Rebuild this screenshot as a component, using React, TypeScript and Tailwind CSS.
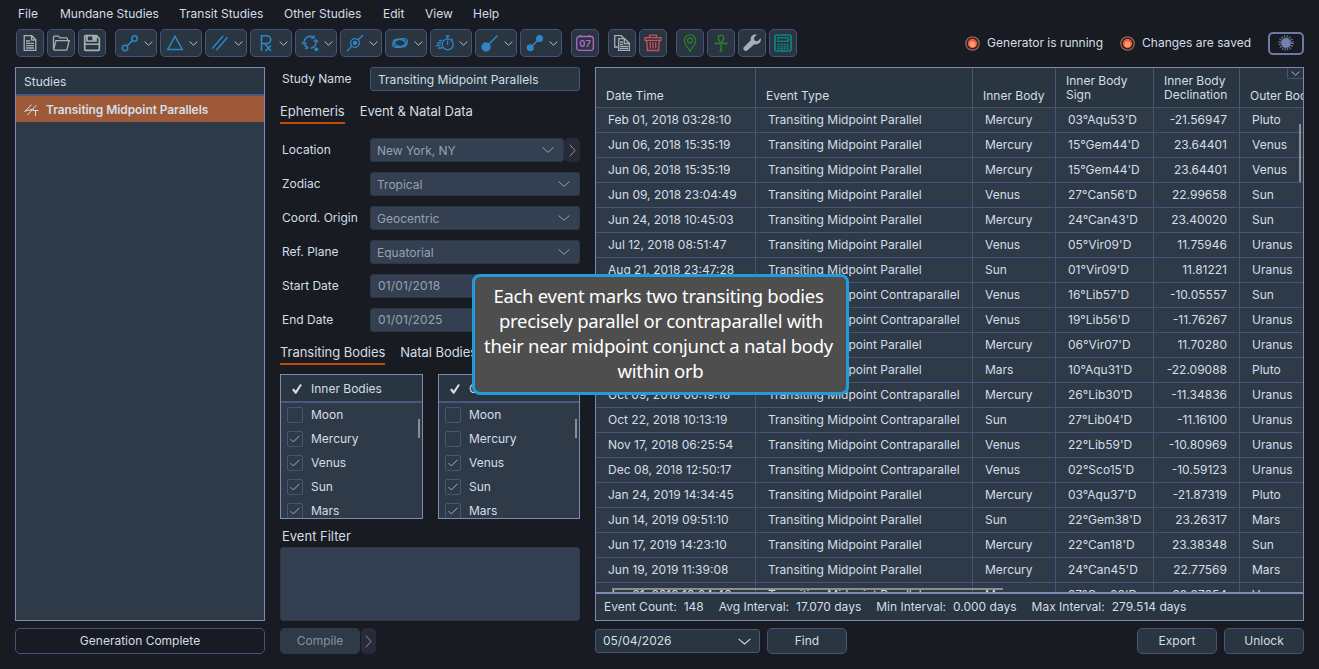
import { ReactNode } from 'react';
import clsx from 'clsx';

const menuItems = [
  { label: 'File', width: 'w-[42px]' },
  { label: 'Mundane Studies', width: 'w-[119px]' },
  { label: 'Transit Studies', width: 'w-[105px]' },
  { label: 'Other Studies', width: 'w-[99px]' },
  { label: 'Edit', width: 'w-[42px]' },
  { label: 'View', width: 'w-[48px]' },
  { label: 'Help', width: 'w-[40px]' },
];

const Icon = ({ children, className = 'text-[#2f86c6]' }: { children: ReactNode; className?: string }) => (
  <svg
    viewBox="0 0 18 18"
    className={clsx('h-[18px] w-[18px] shrink-0', className)}
    fill="none"
    stroke="currentColor"
    strokeWidth="1.3"
  >
    {children}
  </svg>
);

const Chevron = ({ className }: { className?: string }) => (
  <svg viewBox="0 0 12 6" className={className} fill="none" stroke="currentColor" strokeWidth="1">
    <path d="M.5.5 6 5.3 11.5.5" />
  </svg>
);

const SmallChevron = () => (
  <svg viewBox="0 0 9 5" className="h-[5px] w-[9px] shrink-0 text-[#b3bec7]" fill="none" stroke="currentColor" strokeWidth="1">
    <path d="M.6.5 4.5 4.2 8.4.5" />
  </svg>
);

const SideChevron = () => (
  <svg viewBox="0 0 7 13" className="h-[13px] w-[7px] text-[#8b949e]" fill="none" stroke="currentColor" strokeWidth="1">
    <path d="M.8.7 6 6.5.8 12.3" />
  </svg>
);

const DocumentIcon = () => (
  <Icon className="text-[#a6afb5]">
    <path d="M3.2 1.7h7.6l4 4v10.6H3.2zM10.5 2v4h4M5 7h4M5 9.4h8M5 11.7h8M5 14h8" />
  </Icon>
);

const FolderIcon = () => (
  <Icon className="text-[#a6afb5]">
    <path d="M1.5 15V3.2q0-1 1-1h4l1.3 1.6h6.7q1 0 1 1v1.4M1.7 15.3 4 6.7h13.2L15 15.3q-.2.8-1 .8H2.4q-.9 0-.7-.8z" />
  </Icon>
);

const SaveIcon = () => (
  <Icon className="text-[#a6afb5]">
    <path d="M2.5 1.7h11L16.3 4.5v11q0 .9-.9.9H2.6q-.9 0-.9-.9V2.6q0-.9.8-.9zM4 2v5h9V2" strokeWidth="1.7" />
    <path d="M2 10.2h14" strokeWidth="1.5" />
    <path d="M10 2h2v4h-2z" fill="currentColor" />
  </Icon>
);

const dropdownIcons = [
  <Icon>
    <circle cx="4" cy="14" r="2.7" strokeWidth="1.5" />
    <circle cx="13.5" cy="4.5" r="2.7" strokeWidth="1.5" />
    <path d="m6 12 5.5-5.5" strokeWidth="1.7" />
  </Icon>,
  <Icon>
    <path d="M9 2.3 16.3 15.5H1.7z" strokeWidth="1.5" />
  </Icon>,
  <Icon>
    <path d="M1.3 14.5 12.2 1.8M5.3 16.3 16.5 3.2" strokeWidth="1.5" />
  </Icon>,
  <Icon>
    <path d="M5.5 17V1.8h5.3a3.7 3.7 0 0 1 0 7.7H5.5M9 9.7 15 17M9.5 17l5.5-5.5" strokeWidth="1.6" />
  </Icon>,
  <Icon>
    <path d="M3.3 9.5A6 6 0 0 1 12.5 3.3M14.9 6.5A6 6 0 0 1 9.5 14.3M3.5 10.5A6 6 0 0 0 7.3 14.2" strokeWidth="1.5" />
    <path d="m.8 8.2 2.4 2.6 2.5-2M12.5 7.8l2.4-2.2 2.3 2.2M13 1v3.2H9.7M6.3 12v2.5H4" strokeWidth="1.2" />
    <circle cx="15.3" cy="15.3" r="1.9" fill="currentColor" stroke="none" />
  </Icon>,
  <Icon>
    <circle cx="9" cy="9" r="4.3" />
    <circle cx="9" cy="9" r="1.5" fill="currentColor" />
    <path d="m1 17 5-5M12 6l5-5" />
  </Icon>,
  <Icon>
    <ellipse cx="9" cy="9" rx="7.7" ry="4" transform="rotate(-17 9 9)" />
    <ellipse cx="9" cy="9" rx="7" ry="3.6" transform="rotate(14 9 9)" />
    <ellipse cx="9" cy="9" rx="5.5" ry="3.6" transform="rotate(-15 9 9)" strokeWidth=".8" />
  </Icon>,
  <Icon>
    <circle cx="11.6" cy="10.4" r="5.5" />
    <path d="M11.6 11V6.5M9.7 2h3.8M11.6 2v3M15.6 5.8l1-1M3 6.5h3M1 9h4M0 11.5h4.5M2 14h4" />
  </Icon>,
  <Icon>
    <circle cx="5" cy="13" r="4" fill="currentColor" />
    <path d="m7 11 9.5-9.5" strokeWidth="1.6" />
  </Icon>,
  <Icon>
    <circle cx="4.2" cy="13.8" r="2.9" fill="currentColor" />
    <circle cx="13.5" cy="4.5" r="2.9" fill="currentColor" />
    <path d="m5 13 8-8" strokeWidth="1.7" />
  </Icon>,
];

const CalendarIcon = () => (
  <Icon className="text-[#b565c4]">
    <rect x=".7" y="2.5" width="16.6" height="13.8" rx="2.5" />
    <path d="M4.5 1v2M13.5 1v2" strokeWidth="1.6" />
    <text x="9.2" y="12.6" textAnchor="middle" fontSize="9" fontWeight="700" letterSpacing=".4" fill="currentColor" stroke="none">
      07
    </text>
  </Icon>
);

const CopyIcon = () => (
  <Icon className="text-[#a6afb5]">
    <path d="M5 13H1.7V1.7h6.6l3 3" />
    <path d="M5.7 4.7h6l4.6 4.6v7H5.7z" />
    <path d="M11.3 4.7V9.5h5M7 8h3M7 10.3h3M7 12.3h8M7 14.3h8" />
  </Icon>
);

const TrashIcon = () => (
  <Icon className="text-[#c9525a]">
    <path d="M1 3.7h16v2.6H1zM5.5 3.5V1.2h7v2.3M2.7 6.5l.7 10h11.2l.7-10M6.3 8v6.5M9 8v6.5M11.7 8v6.5" />
  </Icon>
);

const PinIcon = () => (
  <Icon className="text-[#2c7d2d]">
    <path d="M9 17.3C7.5 14 3.3 10.5 3.3 6.5a5.7 5.7 0 0 1 11.4 0C14.7 10.5 10.5 14 9 17.3z" />
    <circle cx="9" cy="6.5" r="2.5" />
  </Icon>
);

const AnkhIcon = () => (
  <Icon className="text-[#2c7d2d]">
    <path
      d="M9 9.3C5.5 6.3 5.3 1.2 9 1.2s3.5 5.1 0 8.1zM9 9v8.3M3.5 8.3v2.4M14.5 8.3v2.4M3.5 9.5h11M7.3 17h3.4"
      strokeWidth="1.5"
    />
  </Icon>
);

const WrenchIcon = () => (
  <Icon className="text-[#a6afb5]">
    <path
      d="M17.7 4.2 14.5 7.2 11.5 6.5 10.9 3.7 14 .6C10.3-.4 7 2.3 7.8 6.3L.8 13.2c-1.5 1.9 1.2 4.9 3.4 3.3L11.3 10.2c4.2 1 7.4-2.2 6.4-6z"
      fill="currentColor"
      stroke="none"
    />
  </Icon>
);

const CalculatorIcon = () => (
  <Icon className="text-[#0c8584]">
    <rect x="1" y="1" width="16" height="16" rx="1.8" strokeWidth="1.7" />
    <rect x="4" y="3.7" width="10" height="3.6" />
    <path d="M3.5 10.5h11M3.5 12.7h11M3.5 14.8h11" strokeWidth="1.4" strokeDasharray="2 1" />
  </Icon>
);

const ToolButton = ({ children, dropdown }: { children: ReactNode; dropdown?: boolean }) => (
  <button
    className={clsx(
      'flex h-7 items-center rounded-[5px] border border-[#46537a] bg-[#293540]',
      dropdown ? 'w-[42px] gap-[5px] pl-[5px]' : 'w-7 justify-center',
    )}
  >
    {children}
    {dropdown && <SmallChevron />}
  </button>
);

const StatusLight = ({ label }: { label: string }) => (
  <div className="flex items-center gap-[7px]">
    <svg viewBox="0 0 15 15" className="h-[15px] w-[15px]">
      <circle cx="7.5" cy="7.5" r="6.7" fill="#351610" stroke="#8b6a64" strokeWidth="1.3" />
      <circle cx="7.5" cy="7.5" r="4.7" fill="#ef5a38" />
      <circle cx="7.5" cy="8.3" r="3" fill="#fb9b78" />
    </svg>
    <span>{label}</span>
  </div>
);

const Toolbar = () => (
  <div className="flex h-7 items-center pl-4 pr-[15px]">
    <div className="flex gap-[3px]">
      <ToolButton><DocumentIcon /></ToolButton>
      <ToolButton><FolderIcon /></ToolButton>
      <ToolButton><SaveIcon /></ToolButton>
    </div>
    <div className="ml-[9px] flex gap-[3px]">
      {dropdownIcons.map((icon, i) => (
        <ToolButton key={i} dropdown>{icon}</ToolButton>
      ))}
    </div>
    <div className="ml-[9px] flex">
      <ToolButton><CalendarIcon /></ToolButton>
    </div>
    <div className="ml-[9px] flex gap-[3px]">
      <ToolButton><CopyIcon /></ToolButton>
      <ToolButton><TrashIcon /></ToolButton>
    </div>
    <div className="ml-[9px] flex gap-[3px]">
      <ToolButton><PinIcon /></ToolButton>
      <ToolButton><AnkhIcon /></ToolButton>
      <ToolButton><WrenchIcon /></ToolButton>
      <ToolButton><CalculatorIcon /></ToolButton>
    </div>
    <div className="ml-auto flex items-center gap-[17px]">
      <StatusLight label="Generator is running" />
      <StatusLight label="Changes are saved" />
      <button className="flex h-[23px] w-9 items-center justify-center rounded-[5px] border-2 border-[#6c7aa3]">
        <svg viewBox="0 0 16 16" className="h-4 w-4 shrink-0 text-[#7382ac]">
          <circle cx="8" cy="8" r="4.9" fill="currentColor" />
          <circle cx="8" cy="8" r="6.4" fill="none" stroke="currentColor" strokeWidth="2.6" strokeDasharray="1 1.51" />
        </svg>
      </button>
    </div>
  </div>
);

const StudiesPanel = () => (
  <div className="flex w-[250px] flex-col gap-[7px]">
    <div className="h-[554px] border border-[#7c8ab4] bg-[#2f3a49]">
      <div className="flex h-7 items-center border-b-2 border-[#4a5780] bg-[#293540] pl-2 pt-0.5">Studies</div>
      <div className="flex h-[26px] items-center bg-[#9e5a38] pl-2 pt-0.5 font-semibold tracking-[-0.08px]">
        <svg viewBox="0 0 15 14" className="mr-[7px] h-3.5 w-[15px]" fill="none" stroke="currentColor">
          <path d="M.5 9 7.5 1.5M3.5 12 12.5 2M1 8l9-2M8.5 7.5h6M11.5 7.5v5.5" />
        </svg>
        Transiting Midpoint Parallels
      </div>
    </div>
    <button className="h-[26px] rounded-[5px] border border-[#46537a]">Generation Complete</button>
  </div>
);

const Tabs = ({ tabs }: { tabs: string[] }) => (
  <div className="flex h-[21px] gap-[15px] text-[13px] tracking-[-0.05px]">
    {tabs.map((tab, i) => (
      <div key={tab} className={clsx('whitespace-nowrap', i === 0 && 'border-b-2 border-[#bd4c0b]')}>
        {tab}
      </div>
    ))}
  </div>
);

const fieldStyle = 'flex h-6 items-center rounded-[3px] border border-[#2b3844] bg-[#344052] text-[#94a2af]';

const Field = ({ label, children }: { label: string; children: ReactNode }) => (
  <div className="flex h-6 items-center">
    <span className="w-[90px] pl-0.5">{label}</span>
    {children}
  </div>
);

const Select = ({ value, className }: { value: string; className: string }) => (
  <div className={clsx(fieldStyle, 'justify-between pl-1.5 pr-[9px]', className)}>
    <span className="pt-0.5">{value}</span>
    <Chevron className="h-1.5 w-3" />
  </div>
);

const bodies = ['Moon', 'Mercury', 'Venus', 'Sun', 'Mars'];

const BodyList = ({ title, checked, className }: { title: string; checked: string[]; className: string }) => (
  <div className={clsx('relative h-[145px] overflow-hidden border border-[#7c8ab4] bg-[#2f3a49]', className)}>
    <div className="flex h-7 items-center border-b-2 border-[#4a5780] bg-[#293540] pl-[11px] pt-0.5">
      <svg viewBox="0 0 10 10" className="mr-[9px] h-2.5 w-2.5" fill="currentColor">
        <path d="M0 5.7 2 4.5 3.7 6.7 8 .3 10 .8 4.3 9.7H3.2z" />
      </svg>
      {title}
    </div>
    {bodies.map((body) => (
      <div key={body} className="flex h-6 items-center pl-1.5">
        <span className="mr-2 flex h-4 w-4 items-center justify-center rounded-[2px] border border-[#46537a]">
          {checked.includes(body) && (
            <svg viewBox="0 0 10 8" className="h-2 w-2.5 text-[#a2adb6]" fill="none" stroke="currentColor">
              <path d="M.5 4.2 3.3 7 9.5.7" />
            </svg>
          )}
        </span>
        {body}
      </div>
    ))}
    <div className="absolute right-0.5 top-[44px] h-[19px] w-0.5 bg-[#8b8d8f]" />
  </div>
);

const StudyForm = () => (
  <div className="flex w-[300px] flex-col">
    <Field label="Study Name">
      <div className="flex h-6 w-[210px] items-center rounded-[3px] border border-[#46537a] bg-[#293540] pl-[7px] pt-0.5 tracking-[0.02px]">
        Transiting Midpoint Parallels
      </div>
    </Field>
    <div className="mb-3.5 mt-3">
      <Tabs tabs={['Ephemeris', 'Event & Natal Data']} />
    </div>
    <div className="flex flex-col gap-2.5">
      <Field label="Location">
        <Select value="New York, NY" className="w-[194px]" />
        <span className="flex h-6 w-4 items-center justify-center rounded-[5px] bg-[#262b37]">
          <SideChevron />
        </span>
      </Field>
      <Field label="Zodiac"><Select value="Tropical" className="w-[210px]" /></Field>
      <Field label="Coord. Origin"><Select value="Geocentric" className="w-[210px]" /></Field>
      <Field label="Ref. Plane"><Select value="Equatorial" className="w-[210px]" /></Field>
      <Field label="Start Date"><div className={clsx(fieldStyle, 'w-[210px] pl-[7px] tracking-[0.15px]')}>01/01/2018</div></Field>
      <Field label="End Date"><div className={clsx(fieldStyle, 'w-[210px] pl-[7px] tracking-[0.15px]')}>01/01/2025</div></Field>
    </div>
    <div className="mb-[9px] mt-3">
      <Tabs tabs={['Transiting Bodies', 'Natal Bodies']} />
    </div>
    <div className="flex justify-between">
      <BodyList title="Inner Bodies" checked={['Mercury', 'Venus', 'Sun', 'Mars']} className="w-[143px]" />
      <BodyList title="Outer Bodies" checked={['Venus', 'Sun', 'Mars']} className="w-[142px]" />
    </div>
    <div className="flex h-7 items-center pl-0.5 pt-1.5 text-[13px]">Event Filter</div>
    <div className="h-[74px] rounded-[3px] border border-[#2b3844] bg-[#344052]" />
    <div className="mt-[7px] flex gap-px">
      <button className="h-[26px] w-20 rounded-[5px] bg-[#2f3a49] text-[#84929e]">Compile</button>
      <span className="flex h-[26px] w-[15px] items-center justify-center rounded-[5px] bg-[#262b37]">
        <SideChevron />
      </span>
    </div>
  </div>
);

const par = 'Transiting Midpoint Parallel';
const contra = 'Transiting Midpoint Contraparallel';

const events = [
  ['Feb 01, 2018 03:28:10', par, 'Mercury', "03°Aqu53'D", '-21.56947', 'Pluto'],
  ['Jun 06, 2018 15:35:19', par, 'Mercury', "15°Gem44'D", '23.64401', 'Venus'],
  ['Jun 06, 2018 15:35:19', par, 'Mercury', "15°Gem44'D", '23.64401', 'Venus'],
  ['Jun 09, 2018 23:04:49', par, 'Venus', "27°Can56'D", '22.99658', 'Sun'],
  ['Jun 24, 2018 10:45:03', par, 'Mercury', "24°Can43'D", '23.40020', 'Sun'],
  ['Jul 12, 2018 08:51:47', par, 'Venus', "05°Vir09'D", '11.75946', 'Uranus'],
  ['Aug 21, 2018 23:47:28', par, 'Sun', "01°Vir09'D", '11.81221', 'Uranus'],
  ['Sep 08, 2018 12:16:32', contra, 'Venus', "16°Lib57'D", '-10.05557', 'Sun'],
  ['Sep 11, 2018 04:22:51', contra, 'Venus', "19°Lib56'D", '-11.76267', 'Uranus'],
  ['Sep 12, 2018 09:40:17', par, 'Mercury', "06°Vir07'D", '11.70280', 'Uranus'],
  ['Sep 27, 2018 17:05:38', par, 'Mars', "10°Aqu31'D", '-22.09088', 'Pluto'],
  ['Oct 09, 2018 00:19:18', contra, 'Mercury', "26°Lib30'D", '-11.34836', 'Uranus'],
  ['Oct 22, 2018 10:13:19', contra, 'Sun', "27°Lib04'D", '-11.16100', 'Uranus'],
  ['Nov 17, 2018 06:25:54', contra, 'Venus', "22°Lib59'D", '-10.80969', 'Uranus'],
  ['Dec 08, 2018 12:50:17', contra, 'Venus', "02°Sco15'D", '-10.59123', 'Uranus'],
  ['Jan 24, 2019 14:34:45', par, 'Mercury', "03°Aqu37'D", '-21.87319', 'Pluto'],
  ['Jun 14, 2019 09:51:10', par, 'Sun', "22°Gem38'D", '23.26317', 'Mars'],
  ['Jun 17, 2019 14:23:10', par, 'Mercury', "22°Can18'D", '23.38348', 'Sun'],
  ['Jun 19, 2019 11:39:08', par, 'Mercury', "24°Can45'D", '22.77569', 'Mars'],
  ['Jun 21, 2019 18:04:48', par, 'Mercury', "27°Can03'D", '22.27654', 'Venus'],
];

const headers = ['Date Time', 'Event Type', 'Inner Body', 'Inner Body\nSign', 'Inner Body\nDeclination', 'Outer Body'];
const columns = 'grid grid-cols-[160px_217px_83px_98px_86px_90px]';

const EventTable = () => (
  <div className="relative flex h-[554px] flex-col border border-[#7c8ab4] bg-[#2f3a49]">
    <div className={clsx(columns, 'h-10 shrink-0 overflow-hidden border-b border-[#46565f] bg-[#293540]')}>
      {headers.map((header) => (
        <div
          key={header}
          className={clsx(
            'flex items-end whitespace-pre border-r border-[#46537a] pl-2.5 leading-[14px]',
            header.includes('\n') ? 'pb-[5px]' : 'pb-1',
          )}
        >
          {header}
        </div>
      ))}
    </div>
    <div className="min-h-0 flex-1 overflow-hidden">
      {events.map((row, i) => (
        <div key={i} className={clsx(columns, 'h-[25px] border-b border-[#46537a]')}>
          {row.map((cell, j) => (
            <div
              key={j}
              className={clsx(
                'flex items-center whitespace-nowrap border-r border-[#46537a]',
                j === 4 ? 'justify-end pr-3' : 'pl-3',
              )}
            >
              {cell}
            </div>
          ))}
        </div>
      ))}
    </div>
    <div className="flex h-7 shrink-0 items-center gap-[15px] border-t-2 border-[#7c8ab4] bg-[#293540] pl-2">
      <span className="flex gap-[7px]"><span>Event Count:</span><span>148</span></span>
      <span className="flex gap-[7px]"><span>Avg Interval:</span><span>17.070 days</span></span>
      <span className="flex gap-[7px]"><span>Min Interval:</span><span>0.000 days</span></span>
      <span className="flex gap-[7px]"><span>Max Interval:</span><span>279.514 days</span></span>
    </div>
    <div className="absolute right-0 top-0 flex h-[11px] w-4 items-center justify-center border-b border-l border-[#46537a] bg-[#293540]">
      <SmallChevron />
    </div>
    <div className="absolute right-0.5 top-[56px] h-[58px] w-0.5 bg-[#8b8d8f]" />
    <div className="absolute left-4 top-[520px] h-0.5 w-[391px] bg-[#8b8d8f]" />
  </div>
);

const buttonStyle = 'h-[26px] w-20 rounded-[5px] border border-[#46537a] bg-[#293540]';

const ResultsPanel = () => (
  <div className="flex w-[709px] flex-col gap-[7px] overflow-hidden">
    <EventTable />
    <div className="flex items-center gap-[7px]">
      <div className="flex h-6 w-[165px] items-center justify-between rounded-[3px] border border-[#46537a] bg-[#293540] pl-[7px] pr-2">
        05/04/2026
        <Chevron className="h-[7px] w-[13px]" />
      </div>
      <button className={buttonStyle}>Find</button>
      <button className={clsx(buttonStyle, 'ml-auto')}>Export</button>
      <button className={buttonStyle}>Unlock</button>
    </div>
  </div>
);

const HelpTooltip = () => (
  <div className="absolute left-[472px] top-[274px] h-[121px] w-[377px] rounded-[8px] border-[3px] border-[#239bdb] bg-[#4e4e4e] pt-1.5 text-center font-['Noto_Sans','Open_Sans',sans-serif] text-[18.5px] leading-[25px] tracking-[-0.29px] text-white">
    <div className="whitespace-nowrap pr-1">Each event marks two transiting bodies</div>
    <div className="whitespace-nowrap pl-px">precisely parallel or contraparallel with</div>
    <div className="whitespace-nowrap pr-1">their near midpoint conjunct a natal body</div>
    <div className="whitespace-nowrap">within orb</div>
  </div>
);

const App = () => (
  <div className="relative h-[669px] w-[1319px] overflow-hidden bg-[#191b22] font-['Inter',sans-serif] text-[12px] leading-4 text-[#d3dee6]">
    <nav className="flex h-[29px] pl-[18px] pt-1.5">
      {menuItems.map((item) => (
        <span key={item.label} className={clsx('whitespace-nowrap', item.width)}>{item.label}</span>
      ))}
    </nav>
    <Toolbar />
    <main className="mt-2.5 flex gap-[15px] pl-[15px]">
      <StudiesPanel />
      <StudyForm />
      <ResultsPanel />
    </main>
    <HelpTooltip />
  </div>
);

export default App;
